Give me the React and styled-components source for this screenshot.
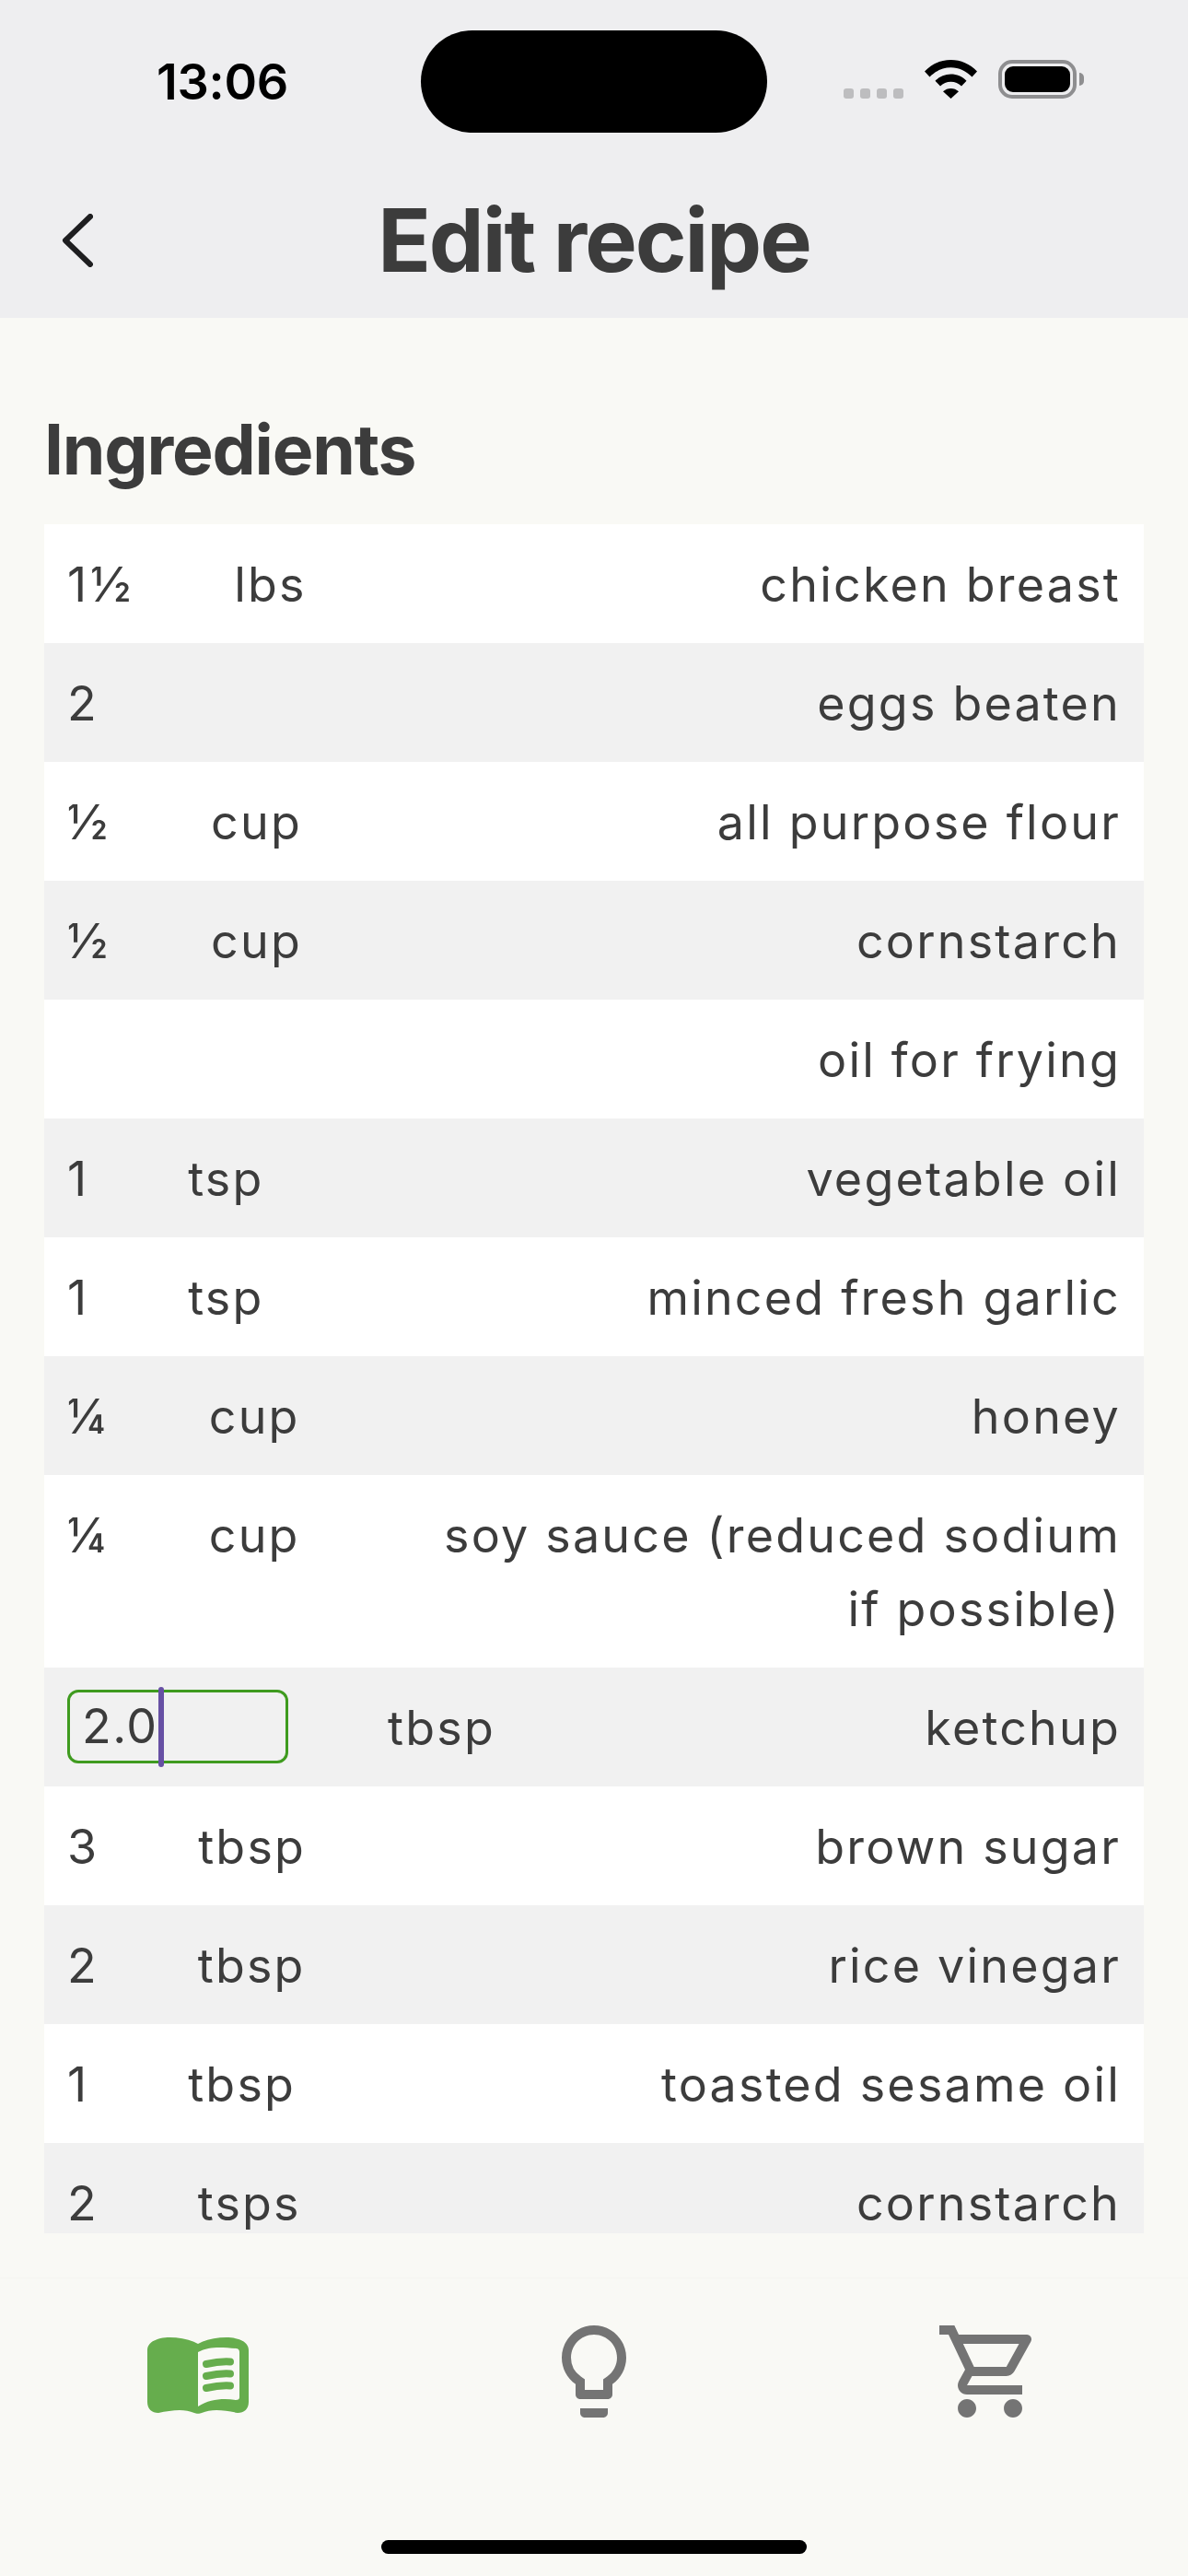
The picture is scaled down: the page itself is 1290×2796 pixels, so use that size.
import styled, { createGlobalStyle } from "styled-components"
import { MdOutlineLightbulb, MdOutlineShoppingCart } from "react-icons/md"

const ingredients = [
	{ qty: "1½", unit: "lbs", name: "chicken breast" },
	{ qty: "2", unit: "", name: "eggs beaten" },
	{ qty: "½", unit: "cup", name: "all purpose flour" },
	{ qty: "½", unit: "cup", name: "cornstarch" },
	{ qty: "", unit: "", name: "oil for frying" },
	{ qty: "1", unit: "tsp", name: "vegetable oil" },
	{ qty: "1", unit: "tsp", name: "minced fresh garlic" },
	{ qty: "¼", unit: "cup", name: "honey" },
	{ qty: "¼", unit: "cup", name: "soy sauce (reduced sodium if possible)" },
	{ qty: "2.0", unit: "tbsp", name: "ketchup", editing: true },
	{ qty: "3", unit: "tbsp", name: "brown sugar" },
	{ qty: "2", unit: "tbsp", name: "rice vinegar" },
	{ qty: "1", unit: "tbsp", name: "toasted sesame oil" },
	{ qty: "2", unit: "tsps", name: "cornstarch" },
]

function WifiIcon() {
	return (
		<svg width="57" height="42" viewBox="0 0 57 42">
			<path d="M28.5 0C17.5 0 8 4.2 0 12.5l5.5 6C12 12 19.6 8.2 28.5 8.2S45 12 51.5 18.5l5.5-6C49 4.200 39.500 0 28.500 0z" fill="#000" />
			<path d="M28.500 15.500c-6.500 0-12.300 2.500-17 7.200l5.500 5.900c3.100-3 7-4.800 11.500-4.800s8.400 1.800 11.500 4.800l5.500-5.900c-4.700-4.700-10.500-7.200-17-7.200z" fill="#000" />
			<path d="M28.500 31c-3.200 0-6.100 1.200-8.500 3.300l8.500 7.700 8.500-7.700C34.600 32.200 31.700 31 28.500 31z" fill="#000" />
		</svg>
	)
}

function BookIcon() {
	return (
		<BookSvg width="110" height="83" viewBox="0 0 110 83">
			<path
				fillRule="evenodd"
				fill="#66ad4d"
				d="M55 7C46 2 35 0 24 0 15 0 0 3 0 14V70C0 78 5 82 12 82 26 79 40 77 51 82 53 83 57 83 59 82 70 77 84 79 98 82 105 82 110 78 110 70V14C110 3 95 0 86 0 75 0 64 2 55 7ZM55 16C68 9 82 11 96 12 99 12 100 14 100 16V65C100 67 99 68 96 68 82 66 68 67 55 75Z"
			/>
			<path d="M64 29C73 27 82 26 90 26.500M64 42C73 40 82 39 90 39.500M64 55C73 53 82 52 90 52.500" stroke="#66ad4d" strokeWidth="8" strokeLinecap="round" fill="none" />
		</BookSvg>
	)
}

function App() {
	return (
		<Screen>
			<GlobalStyle />
			<TopArea>
				<StatusBar>
					<Time>13:06</Time>
					<Island />
					<StatusIcons>
						<SignalDots>
							<Dot />
							<Dot />
							<Dot />
							<Dot />
						</SignalDots>
						<WifiIcon />
						<Battery>
							<BatteryLevel />
						</Battery>
					</StatusIcons>
				</StatusBar>
				<NavBar>
					<BackIcon width="34" height="58" viewBox="0 0 34 58">
						<path d="M31 3 4 29l27 26" />
					</BackIcon>
					<Title>Edit recipe</Title>
				</NavBar>
			</TopArea>
			<Content>
				<SectionTitle>Ingredients</SectionTitle>
				<List>
					{ingredients.map((item, i) => (
						<Row key={item.name + i} $shaded={i % 2 === 1}>
							<Leading>
								{item.editing ? (
									<QtyInput>
										{item.qty}
										<Caret />
									</QtyInput>
								) : (
									item.qty && <Qty $fraction={/[½¼]/.test(item.qty)}>{item.qty}</Qty>
								)}
								{item.unit && <span>{item.unit}</span>}
							</Leading>
							<Name>{item.name}</Name>
						</Row>
					))}
				</List>
			</Content>
			<TabBar>
				<Tabs>
					<Tab>
						<BookIcon />
					</Tab>
					<Tab>
						<MdOutlineLightbulb size={120} />
					</Tab>
					<Tab>
						<MdOutlineShoppingCart size={120} />
					</Tab>
				</Tabs>
				<HomeIndicator />
			</TabBar>
		</Screen>
	)
}

export default App

const GlobalStyle = createGlobalStyle`
	html, body {
		margin: 0;
		padding: 0;
		background: #f9f9f5;
	}
	* {
		box-sizing: border-box;
	}
`

const Screen = styled.div`
	width: 1290px;
	height: 2796px;
	display: flex;
	flex-direction: column;
	overflow: hidden;
	background: #f9f9f5;
	color: #3c3c3c;
	font-family: Inter, "Liberation Sans", sans-serif;
`

const TopArea = styled.header`
	height: 345px;
	flex-shrink: 0;
	background: #eeeef0;
	padding-top: 33px;
`

const StatusBar = styled.div`
	display: grid;
	grid-template-columns: 457px 376px 1fr;
	height: 111px;
`

const Time = styled.div`
	padding-left: 170px;
	padding-top: 24px;
	font-size: 54px;
	line-height: 64px;
	font-weight: 600;
	letter-spacing: -0.300px;
	color: #000;
`

const Island = styled.div`
	height: 111px;
	border-radius: 56px;
	background: #000;
`

const StatusIcons = styled.div`
	display: flex;
	align-items: flex-start;
	padding: 32px 0 0 83px;
	svg {
		margin-left: 23px;
		flex-shrink: 0;
	}
`

const SignalDots = styled.div`
	display: flex;
	gap: 7px;
	margin-top: 31px;
`

const Dot = styled.div`
	width: 11px;
	height: 11px;
	border-radius: 3px;
	background: #bdbdbf;
`

const Battery = styled.div`
	position: relative;
	margin-left: 23px;
	width: 85px;
	height: 42px;
	padding: 3px;
	border: 4px solid #8e8e90;
	border-radius: 15px;
	&::after {
		content: "";
		position: absolute;
		right: -12px;
		top: 10px;
		width: 5px;
		height: 14px;
		border-radius: 0 5px 5px 0;
		background: #8e8e90;
	}
`

const BatteryLevel = styled.div`
	height: 100%;
	border-radius: 9px;
	background: #000;
`

const NavBar = styled.div`
	display: grid;
	grid-template-columns: 1fr auto 1fr;
	align-items: center;
	padding: 33px 0 0 67px;
	height: 201px;
`

const BackIcon = styled.svg`
	fill: none;
	stroke: #1e1e20;
	stroke-width: 6;
	stroke-linecap: round;
	stroke-linejoin: round;
`

const Title = styled.h1`
	margin: 0 67px 0 0;
	font-size: 95px;
	line-height: 110px;
	font-weight: 700;
	letter-spacing: -2px;
	color: #3c3c3c;
`

const Content = styled.main`
	flex: 1;
	min-height: 0;
	display: flex;
	flex-direction: column;
	padding: 96px 48px 48px;
`

const SectionTitle = styled.h2`
	margin: 0 0 34px;
	font-size: 75px;
	line-height: 94px;
	font-weight: 700;
	letter-spacing: -1.200px;
	color: #3c3c3c;
`

const List = styled.div`
	flex: 1;
	min-height: 0;
	overflow: hidden;
`

const Row = styled.div`
	display: flex;
	gap: 60px;
	padding: 26px 25px 23px 25px;
	background: ${(p) => (p.$shaded ? "#f1f1f1" : "#fff")};
	font-size: 52px;
	line-height: 80px;
	font-weight: 380;
	letter-spacing: 2.200px;
`

const Leading = styled.div`
	display: flex;
	gap: 108px;
	flex-shrink: 0;
`

const Qty = styled.span`
	letter-spacing: ${(p) => (p.$fraction ? "4px" : "2px")};
`

const QtyInput = styled.div`
	width: 240px;
	height: 80px;
	margin-top: -2px;
	display: flex;
	align-items: center;
	padding-left: 13px;
	border: 3px solid #3f9b1f;
	border-radius: 12px;
	letter-spacing: 1.500px;
`

const Caret = styled.span`
	flex-shrink: 0;
	width: 6px;
	height: 87px;
	border-radius: 3px;
	background: #6750a4;
`

const Name = styled.div`
	flex: 1;
	max-width: 750px;
	margin-left: auto;
	text-align: right;
`

const TabBar = styled.footer`
	height: 324px;
	flex-shrink: 0;
	display: flex;
	flex-direction: column;
	align-items: center;
	border-top: 1px solid #f5f5f1;
	padding-top: 41px;
`

const Tabs = styled.nav`
	width: 100%;
	display: grid;
	grid-template-columns: repeat(3, 1fr);
	color: #747474;
`

const Tab = styled.div`
	height: 120px;
	display: flex;
	align-items: center;
	justify-content: center;
`

const BookSvg = styled.svg`
	margin-top: 8px;
`

const HomeIndicator = styled.div`
	width: 462px;
	height: 15px;
	margin-top: auto;
	margin-bottom: 24px;
	border-radius: 8px;
	background: #000;
`
